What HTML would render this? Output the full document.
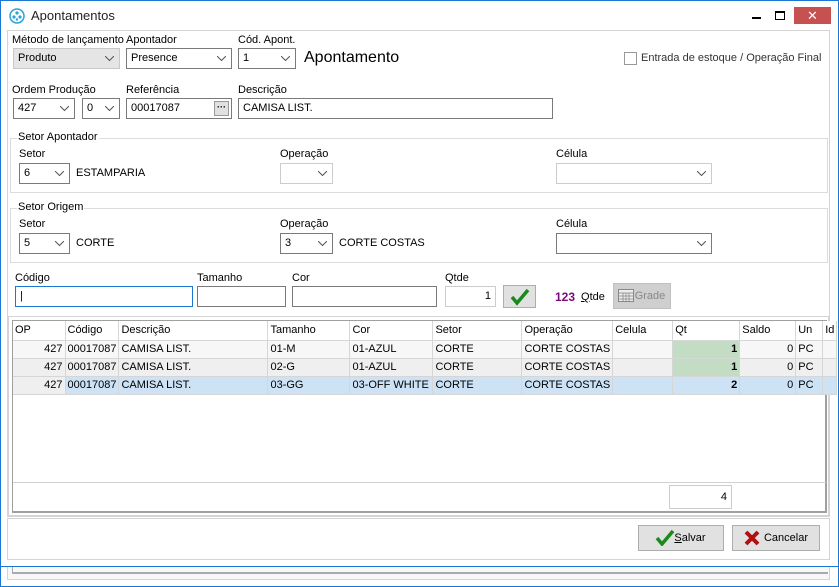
<!DOCTYPE html>
<html><head><meta charset="utf-8"><style>
*{box-sizing:border-box;margin:0;padding:0}
body{width:839px;height:587px;overflow:hidden;background:#fff;font-family:"Liberation Sans",sans-serif;font-size:11px;color:#000;position:relative}
.a{position:absolute}
.lbl{position:absolute;font-size:11px;white-space:nowrap}
.box{position:absolute;border:1px solid #7a7a7a;background:#fff;height:21px;padding:3px 4px;white-space:nowrap}
.cb svg{position:absolute;right:5px;top:7px}
.grp{position:absolute;border:1px solid #dcdcdc}
.grp>span{position:absolute;top:-8px;left:6px;background:#fff;padding:0 1px}
table{border-collapse:collapse;position:absolute;left:13px;top:321px;table-layout:fixed}
td{border-right:1px solid #d6d6d6;border-bottom:1px solid #d6d6d6;height:18px;padding:0 2px;white-space:nowrap;overflow:hidden;font-size:11px}
tr.h td{height:19px;background:#fff}
tr.r1 td{background:#f7f7f7}
tr.r2 td{background:#efefef}
tr.r3 td{background:#cde3f5}
.rt{text-align:right}
td.g{background:#c2ddc4 !important;font-weight:bold;text-align:right}
.btn{position:absolute;border:1px solid #adadad;background:#e1e1e1;text-align:center}
</style></head><body>
<div class="a" style="left:0;top:0;width:839px;height:587px;border:1px solid #1a78d4;border-bottom:none"></div>
<!-- title -->
<svg class="a" style="left:9px;top:8px" width="16" height="16" viewBox="0 0 16 16"><circle cx="8" cy="8" r="7" fill="none" stroke="#2aa3dc" stroke-width="1.5"/><circle cx="8" cy="5" r="1.6" fill="#2aa3dc"/><circle cx="5" cy="9" r="1.6" fill="#2aa3dc"/><circle cx="11" cy="9" r="1.6" fill="#2aa3dc"/><circle cx="8" cy="11.5" r="1.2" fill="#2aa3dc"/></svg>
<div class="lbl" style="left:31px;top:8px;font-size:13px;color:#222">Apontamentos</div>
<div class="a" style="left:752px;top:17px;width:9px;height:2px;background:#000"></div>
<div class="a" style="left:775px;top:11px;width:10px;height:9px;border:1px solid #000;border-top-width:2px"></div>
<div class="a" style="left:794px;top:7px;width:37px;height:17px;background:#c75050;color:#fff;text-align:center;font-size:13px;line-height:17px">✕</div>
<!-- main panel -->
<div class="a" style="left:7px;top:30px;width:823px;height:487px;border:1px solid #d4d4d4"></div>
<div class="lbl" style="left:12px;top:34px">Método de lançamento</div>
<div class="box cb" style="left:13px;top:48px;width:107px;background:#e5e5e5;border-color:#c8c8c8">Produto<svg width="9" height="6"><path d="M0 0L4.5 4.5L9 0" fill="none" stroke="#555"/></svg></div>
<div class="lbl" style="left:126px;top:34px">Apontador</div>
<div class="box cb" style="left:126px;top:48px;width:106px">Presence<svg width="9" height="6"><path d="M0 0L4.5 4.5L9 0" fill="none" stroke="#555"/></svg></div>
<div class="lbl" style="left:238px;top:34px">Cód. Apont.</div>
<div class="box cb" style="left:238px;top:48px;width:58px">1<svg width="9" height="6"><path d="M0 0L4.5 4.5L9 0" fill="none" stroke="#555"/></svg></div>
<div class="lbl" style="left:304px;top:49px;font-size:16px">Apontamento</div>
<div class="a" style="left:624px;top:52px;width:13px;height:13px;border:1px solid #999"></div>
<div class="lbl" style="left:641px;top:52px;color:#333">Entrada de estoque / Operação Final</div>
<div class="lbl" style="left:12px;top:84px">Ordem Produção</div>
<div class="box cb" style="left:13px;top:98px;width:62px">427<svg width="9" height="6"><path d="M0 0L4.5 4.5L9 0" fill="none" stroke="#555"/></svg></div>
<div class="box cb" style="left:82px;top:98px;width:38px">0<svg width="9" height="6"><path d="M0 0L4.5 4.5L9 0" fill="none" stroke="#555"/></svg></div>
<div class="lbl" style="left:126px;top:84px">Referência</div>
<div class="box" style="left:126px;top:98px;width:106px">00017087</div>
<div class="a" style="left:214px;top:101px;width:15px;height:15px;background:#e1e1e1;border:1px solid #999;font-size:9px;text-align:center;line-height:10px;font-weight:bold">···</div>
<div class="lbl" style="left:238px;top:84px">Descrição</div>
<div class="box" style="left:238px;top:98px;width:315px">CAMISA LIST.</div>
<!-- groups -->
<div class="grp" style="left:10px;top:138px;width:818px;height:55px"><span>Setor Apontador</span></div>
<div class="lbl" style="left:19px;top:148px">Setor</div>
<div class="box cb" style="left:19px;top:163px;width:51px">6<svg width="9" height="6"><path d="M0 0L4.5 4.5L9 0" fill="none" stroke="#555"/></svg></div>
<div class="lbl" style="left:76px;top:167px">ESTAMPARIA</div>
<div class="lbl" style="left:280px;top:148px">Operação</div>
<div class="box cb" style="left:280px;top:163px;width:53px;border-color:#ccc"><svg width="9" height="6"><path d="M0 0L4.5 4.5L9 0" fill="none" stroke="#555"/></svg></div>
<div class="lbl" style="left:556px;top:148px">Célula</div>
<div class="box cb" style="left:556px;top:163px;width:156px;border-color:#ccc"><svg width="9" height="6"><path d="M0 0L4.5 4.5L9 0" fill="none" stroke="#555"/></svg></div>
<div class="grp" style="left:10px;top:208px;width:818px;height:55px"><span>Setor Origem</span></div>
<div class="lbl" style="left:19px;top:218px">Setor</div>
<div class="box cb" style="left:19px;top:233px;width:51px">5<svg width="9" height="6"><path d="M0 0L4.5 4.5L9 0" fill="none" stroke="#555"/></svg></div>
<div class="lbl" style="left:76px;top:237px">CORTE</div>
<div class="lbl" style="left:280px;top:218px">Operação</div>
<div class="box cb" style="left:280px;top:233px;width:53px">3<svg width="9" height="6"><path d="M0 0L4.5 4.5L9 0" fill="none" stroke="#555"/></svg></div>
<div class="lbl" style="left:339px;top:237px">CORTE COSTAS</div>
<div class="lbl" style="left:556px;top:218px">Célula</div>
<div class="box cb" style="left:556px;top:233px;width:156px"><svg width="9" height="6"><path d="M0 0L4.5 4.5L9 0" fill="none" stroke="#555"/></svg></div>
<!-- entry row -->
<div class="lbl" style="left:15px;top:272px">Código</div>
<div class="box" style="left:15px;top:286px;width:178px;border-color:#1a78d4">|</div>
<div class="lbl" style="left:197px;top:272px">Tamanho</div>
<div class="box" style="left:197px;top:286px;width:89px"></div>
<div class="lbl" style="left:292px;top:272px">Cor</div>
<div class="box" style="left:292px;top:286px;width:145px"></div>
<div class="lbl" style="left:445px;top:272px">Qtde</div>
<div class="box" style="left:445px;top:286px;width:51px;border-color:#ccc;text-align:right">1</div>
<div class="btn" style="left:503px;top:285px;width:33px;height:23px"><svg width="20" height="18" style="margin-top:2px" viewBox="0 0 20 18"><path d="M2 9L7 15L18 2" fill="none" stroke="#1a8a1a" stroke-width="3.5"/></svg></div>
<div class="lbl" style="left:555px;top:290px;color:#7a0a7a;font-weight:bold;font-size:12px">123</div>
<div class="lbl" style="left:581px;top:291px"><u>Q</u>tde</div>
<div class="btn" style="left:613px;top:283px;width:58px;height:26px;background:#cfcfcf;border-color:#c0c0c0;color:#888;line-height:24px;padding-left:16px">G<span>rade</span></div>
<svg class="a" style="left:618px;top:289px" width="16" height="13"><rect x=".5" y=".5" width="15" height="12" fill="#eee" stroke="#888"/><path d="M1 4H15M1 7H15M1 10H15M5 4V12M8 4V12M11 4V12" stroke="#999"/></svg>
<!-- grid -->
<div class="a" style="left:8px;top:316px;width:821px;height:200px;border:1px solid #d4d4d4"></div>
<div class="a" style="left:12px;top:320px;width:815px;height:193px;border:1px solid #a0a0a0;border-width:1px 2px 2px 1px;border-color:#a0a0a0"></div>
<table>
<colgroup><col style="width:52px"><col style="width:51px"><col style="width:149px"><col style="width:82px"><col style="width:83px"><col style="width:89px"><col style="width:87px"><col style="width:60px"><col style="width:67px"><col style="width:56px"><col style="width:27px"><col style="width:10px"></colgroup>
<tr class="h"><td>OP</td><td>Código</td><td>Descrição</td><td>Tamanho</td><td>Cor</td><td>Setor</td><td>Operação</td><td>Celula</td><td>Qt</td><td>Saldo</td><td>Un</td><td>Id</td></tr>
<tr class="r1"><td class="rt">427</td><td>00017087</td><td>CAMISA LIST.</td><td>01-M</td><td>01-AZUL</td><td>CORTE</td><td>CORTE COSTAS</td><td></td><td class="g">1</td><td class="rt">0</td><td>PC</td><td></td></tr>
<tr class="r2"><td class="rt">427</td><td>00017087</td><td>CAMISA LIST.</td><td>02-G</td><td>01-AZUL</td><td>CORTE</td><td>CORTE COSTAS</td><td></td><td class="g">1</td><td class="rt">0</td><td>PC</td><td></td></tr>
<tr class="r3"><td class="rt" style="background:#efefef">427</td><td>00017087</td><td>CAMISA LIST.</td><td>03-GG</td><td>03-OFF WHITE</td><td>CORTE</td><td>CORTE COSTAS</td><td></td><td class="rt" style="font-weight:bold">2</td><td class="rt">0</td><td>PC</td><td></td></tr>
</table>
<div class="a" style="left:13px;top:482px;width:813px;height:1px;background:#d0d0d0"></div>
<div class="box" style="left:669px;top:485px;width:63px;height:24px;border-color:#ccc;text-align:right;padding-top:5px">4</div>
<!-- bottom -->
<div class="a" style="left:7px;top:518px;width:823px;height:42px;border:1px solid #d4d4d4"></div>
<div class="btn" style="left:638px;top:525px;width:86px;height:26px;line-height:24px;padding-left:18px"><u>S</u>alvar</div>
<svg class="a" style="left:655px;top:529px" width="20" height="17" viewBox="0 0 20 17"><path d="M2 9L7 15L18 2" fill="none" stroke="#1a8a1a" stroke-width="3.5"/></svg>
<div class="btn" style="left:732px;top:525px;width:88px;height:26px;line-height:24px;padding-left:20px">Cancelar</div>
<svg class="a" style="left:744px;top:530px" width="16" height="16"><path d="M2 2L14 14M14 2L2 14" stroke="#b01010" stroke-width="4"/></svg>
<div class="a" style="left:0;top:566px;width:839px;height:1px;background:#1a78d4"></div>
<div class="a" style="left:7px;top:567px;width:823px;height:13px;border:1px solid #d4d4d4;border-top:none;background:#f8f8f8"></div>
<div class="a" style="left:12px;top:567px;width:816px;height:7px;border-left:1px solid #aaa;border-bottom:2px solid #aaa"></div>
<div class="a" style="left:0;top:586px;width:839px;height:1px;background:#1a78d4"></div>
</body></html>
